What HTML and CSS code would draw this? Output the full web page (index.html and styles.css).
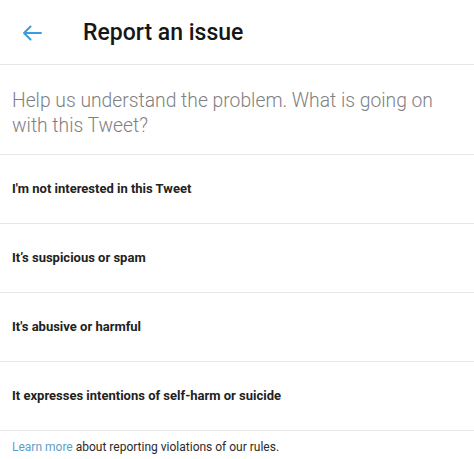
FILE: index.html
```html
<!DOCTYPE html>
<html>
<head>
<meta charset="utf-8">
<link rel="stylesheet" href="styles.css">
</head>
<body>
<div class="page">
  <header class="header">
    <svg class="back" width="20" height="16" viewBox="0 0 20 16" aria-hidden="true">
      <path d="M19 8H2M8.5 1.5L2 8l6.5 6.5" fill="none" stroke="#3b9be0" stroke-width="2" stroke-linecap="round" stroke-linejoin="round"/>
    </svg>
    <h1 class="title">Report an issue</h1>
  </header>
  <p class="intro">Help us understand the problem. What is going on with this Tweet?</p>
  <ul class="options">
    <li class="option">I'm not interested in this Tweet</li>
    <li class="option">It’s suspicious or spam</li>
    <li class="option">It's abusive or harmful</li>
    <li class="option">It expresses intentions of self-harm or suicide</li>
  </ul>
  <p class="footer"><a class="link" href="#">Learn more</a> about reporting violations of our rules.</p>
</div>
</body>
</html>
```

FILE: styles.css
```css
* { box-sizing: border-box; }
html, body { margin: 0; padding: 0; background: #fff; }
body { font-family: Roboto, "Noto Sans", sans-serif; color: #1c1c1c; }
.page { width: 474px; }
.header {
  height: 65px;
  display: flex;
  align-items: center;
  border-bottom: 1px solid #e6e6e6;
}
.back { margin-left: 22px; margin-top: 1px; }
.title {
  margin: 0 0 0 41px;
  font-size: 23px;
  font-weight: 500;
  color: #161616;
}
.intro {
  margin: 0;
  padding: 23px 20px 0 12px;
  height: 90px;
  font-size: 19.3px;
  font-weight: 300;
  line-height: 25px;
  color: #808080;
  border-bottom: 1px solid #e6e6e6;
}
.options { list-style: none; margin: 0; padding: 0; }
.option {
  height: 69px;
  display: flex;
  align-items: center;
  padding: 0 12px 2px;
  font-size: 13px;
  font-weight: 700;
  color: #222;
  border-bottom: 1px solid #e6e6e6;
}
.footer {
  margin: 0;
  padding: 9px 12px 0;
  font-size: 12px;
  color: #2a2a2a;
}
.link { color: #5b9fc9; text-decoration: none; }
```
